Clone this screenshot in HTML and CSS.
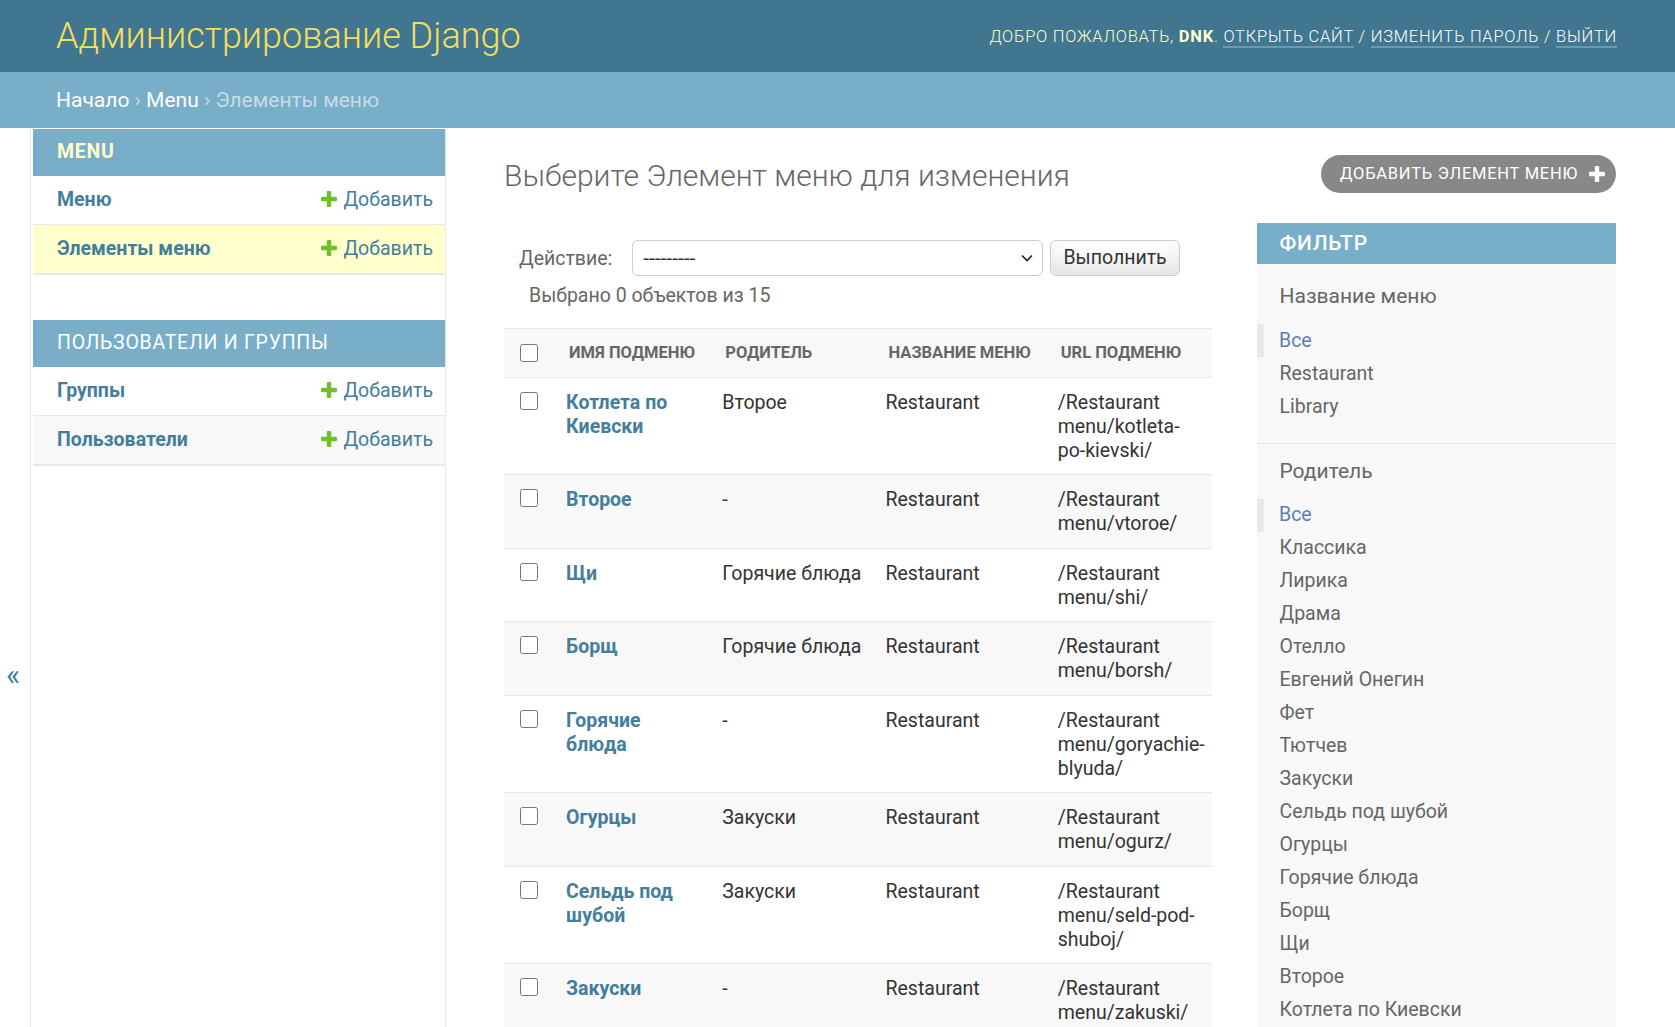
FILE: index.html
```html
<!DOCTYPE html>
<html lang="ru">
<head>
<meta charset="utf-8">
<title>Выберите Элемент меню для изменения | Администрирование Django</title>
<link rel="stylesheet" href="styles.css">
</head>
<body>
<div class="container">
  <header class="header">
    <div class="branding">
      <h1 class="site-name"><a href="#">Администрирование Django</a></h1>
    </div>
    <div class="user-tools">
      Добро пожаловать, <strong>dnk</strong>. <a href="#">Открыть сайт</a> / <a href="#">Изменить пароль</a> / <a href="#">Выйти</a>
    </div>
  </header>

  <div class="breadcrumbs">
    <a href="#">Начало</a> › <a href="#">Menu</a> › Элементы меню
  </div>

  <div class="main">
    <button class="toggle-nav" type="button" aria-label="Toggle navigation">«</button>

    <nav class="nav-sidebar">
      <div class="app-module current-app">
        <table class="app-table">
          <caption><a class="section" href="#">Menu</a></caption>
          <tr>
            <th scope="row"><a href="#">Меню</a></th>
            <td><a class="addlink" href="#"><svg class="plus" viewBox="192 188 1408 1408"><path d="M1600 796v192q0 40-28 68t-68 28h-416v416q0 40-28 68t-68 28h-192q-40 0-68-28t-28-68v-416h-416q-40 0-68-28t-28-68v-192q0-40 28-68t68-28h416v-416q0-40 28-68t68-28h192q40 0 68 28t28 68v416h416q40 0 68 28t28 68z"/></svg>Добавить</a></td>
          </tr>
          <tr class="current-model">
            <th scope="row"><a href="#">Элементы меню</a></th>
            <td><a class="addlink" href="#"><svg class="plus" viewBox="192 188 1408 1408"><path d="M1600 796v192q0 40-28 68t-68 28h-416v416q0 40-28 68t-68 28h-192q-40 0-68-28t-28-68v-416h-416q-40 0-68-28t-28-68v-192q0-40 28-68t68-28h416v-416q0-40 28-68t68-28h192q40 0 68 28t28 68v416h416q40 0 68 28t28 68z"/></svg>Добавить</a></td>
          </tr>
        </table>
      </div>

      <div class="app-module">
        <table class="app-table">
          <caption><a class="section" href="#">Пользователи и группы</a></caption>
          <tr>
            <th scope="row"><a href="#">Группы</a></th>
            <td><a class="addlink" href="#"><svg class="plus" viewBox="192 188 1408 1408"><path d="M1600 796v192q0 40-28 68t-68 28h-416v416q0 40-28 68t-68 28h-192q-40 0-68-28t-28-68v-416h-416q-40 0-68-28t-28-68v-192q0-40 28-68t68-28h416v-416q0-40 28-68t68-28h192q40 0 68 28t28 68v416h416q40 0 68 28t28 68z"/></svg>Добавить</a></td>
          </tr>
          <tr class="hover-row">
            <th scope="row"><a href="#">Пользователи</a></th>
            <td><a class="addlink" href="#"><svg class="plus" viewBox="192 188 1408 1408"><path d="M1600 796v192q0 40-28 68t-68 28h-416v416q0 40-28 68t-68 28h-192q-40 0-68-28t-28-68v-416h-416q-40 0-68-28t-28-68v-192q0-40 28-68t68-28h416v-416q0-40 28-68t68-28h192q40 0 68 28t28 68v416h416q40 0 68 28t28 68z"/></svg>Добавить</a></td>
          </tr>
        </table>
      </div>
    </nav>

    <div class="content">
      <div class="content-head">
        <h1>Выберите Элемент меню для изменения</h1>
        <a class="object-tool" href="#">Добавить Элемент меню<svg class="tool-plus" viewBox="192 188 1408 1408"><path d="M1600 796v192q0 40-28 68t-68 28h-416v416q0 40-28 68t-68 28h-192q-40 0-68-28t-28-68v-416h-416q-40 0-68-28t-28-68v-192q0-40 28-68t68-28h416v-416q0-40 28-68t68-28h192q40 0 68 28t28 68v416h416q40 0 68 28t28 68z"/></svg></a>
      </div>

      <div class="changelist">
        <div class="changelist-form">
          <div class="actions">
            <label>Действие: <span class="select-wrap"><select name="action">
              <option selected>---------</option>
              <option>Удалить выбранные Элементы меню</option>
            </select><svg class="chevron" viewBox="0 0 12 8"><path d="M1 1.5 6 6.5 11 1.5"/></svg></span></label>
            <button type="button" class="button">Выполнить</button>
            <span class="action-counter">Выбрано 0 объектов из 15</span>
          </div>

          <table class="results">
            <colgroup>
              <col class="c-check">
              <col class="c-name">
              <col class="c-parent">
              <col class="c-menu">
              <col class="c-url">
            </colgroup>
            <thead>
              <tr>
                <th class="action-checkbox-column"><input type="checkbox"></th>
                <th>Имя подменю</th>
                <th>Родитель</th>
                <th>Название меню</th>
                <th>URL подменю</th>
              </tr>
            </thead>
            <tbody>
              <tr class="row1">
                <td class="action-checkbox"><input type="checkbox"></td>
                <th><a href="#">Котлета по Киевски</a></th>
                <td>Второе</td>
                <td>Restaurant</td>
                <td class="url">/Restaurant menu/kotleta-po-kievski/</td>
              </tr>
              <tr class="row2">
                <td class="action-checkbox"><input type="checkbox"></td>
                <th><a href="#">Второе</a></th>
                <td>-</td>
                <td>Restaurant</td>
                <td class="url">/Restaurant menu/vtoroe/</td>
              </tr>
              <tr class="row1">
                <td class="action-checkbox"><input type="checkbox"></td>
                <th><a href="#">Щи</a></th>
                <td>Горячие блюда</td>
                <td>Restaurant</td>
                <td class="url">/Restaurant menu/shi/</td>
              </tr>
              <tr class="row2">
                <td class="action-checkbox"><input type="checkbox"></td>
                <th><a href="#">Борщ</a></th>
                <td>Горячие блюда</td>
                <td>Restaurant</td>
                <td class="url">/Restaurant menu/borsh/</td>
              </tr>
              <tr class="row1">
                <td class="action-checkbox"><input type="checkbox"></td>
                <th><a href="#">Горячие блюда</a></th>
                <td>-</td>
                <td>Restaurant</td>
                <td class="url">/Restaurant menu/goryachie-blyuda/</td>
              </tr>
              <tr class="row2">
                <td class="action-checkbox"><input type="checkbox"></td>
                <th><a href="#">Огурцы</a></th>
                <td>Закуски</td>
                <td>Restaurant</td>
                <td class="url">/Restaurant menu/ogurz/</td>
              </tr>
              <tr class="row1">
                <td class="action-checkbox"><input type="checkbox"></td>
                <th><a href="#">Сельдь под шубой</a></th>
                <td>Закуски</td>
                <td>Restaurant</td>
                <td class="url">/Restaurant menu/seld-pod-shuboj/</td>
              </tr>
              <tr class="row2">
                <td class="action-checkbox"><input type="checkbox"></td>
                <th><a href="#">Закуски</a></th>
                <td>-</td>
                <td>Restaurant</td>
                <td class="url">/Restaurant menu/zakuski/</td>
              </tr>
            </tbody>
          </table>
        </div>

        <div class="filter">
          <h2>Фильтр</h2>
          <h3>Название меню</h3>
          <ul>
            <li class="selected"><a href="#">Все</a></li>
            <li><a href="#">Restaurant</a></li>
            <li><a href="#">Library</a></li>
          </ul>
          <h3>Родитель</h3>
          <ul>
            <li class="selected"><a href="#">Все</a></li>
            <li><a href="#">Классика</a></li>
            <li><a href="#">Лирика</a></li>
            <li><a href="#">Драма</a></li>
            <li><a href="#">Отелло</a></li>
            <li><a href="#">Евгений Онегин</a></li>
            <li><a href="#">Фет</a></li>
            <li><a href="#">Тютчев</a></li>
            <li><a href="#">Закуски</a></li>
            <li><a href="#">Сельдь под шубой</a></li>
            <li><a href="#">Огурцы</a></li>
            <li><a href="#">Горячие блюда</a></li>
            <li><a href="#">Борщ</a></li>
            <li><a href="#">Щи</a></li>
            <li><a href="#">Второе</a></li>
            <li><a href="#">Котлета по Киевски</a></li>
          </ul>
        </div>
      </div>
    </div>
  </div>
</div>
</body>
</html>
```

FILE: styles.css
```css
html, body {
  margin: 0;
  padding: 0;
  overflow: hidden;
}

body {
  font-family: Roboto, "Noto Sans", "Liberation Sans", sans-serif;
  font-size: 21px;
  color: #333;
  background: #fff;
}

a {
  color: #447e9b;
  text-decoration: none;
}

/* Header */
.header {
  box-sizing: border-box;
  height: 72px;
  display: flex;
  justify-content: space-between;
  align-items: center;
  padding: 0 58px 0 56px;
  background: #417690;
  color: #ffc;
}

.site-name {
  margin: 0;
  font-size: 36px;
  font-weight: 300;
  line-height: 42px;
}

.site-name a {
  color: #f5dd5d;
}

.user-tools {
  font-size: 16.5px;
  font-weight: 300;
  letter-spacing: 0.75px;
  text-transform: uppercase;
  color: #ffc;
}

.user-tools strong {
  font-weight: 700;
}

.user-tools a {
  color: #fff;
  border-bottom: 2px solid rgba(255, 255, 255, 0.25);
}

/* Breadcrumbs */
.breadcrumbs {
  background: #79aec8;
  padding: 16px 56px 14px;
  color: #c4dce8;
  font-size: 21px;
  line-height: 25.5px;
}

.breadcrumbs a {
  color: #fff;
}

/* Main layout */
.main {
  display: flex;
}

.toggle-nav {
  flex: 0 0 31px;
  align-self: flex-start;
  height: 1094px;
  box-sizing: border-box;
  display: flex;
  align-items: center;
  justify-content: center;
  padding: 0 4px 0 0;
  margin: 0;
  border: 0;
  border-right: 1px solid #e8e8e8;
  background: #fff;
  color: #447e9b;
  font-family: Roboto, sans-serif;
  font-size: 30px;
  line-height: 1;
}

.nav-sidebar {
  flex: 0 0 415px;
  box-sizing: border-box;
  padding-left: 2px;
  border-top: 1.5px solid transparent;
  border-right: 1px solid #e8e8e8;
}

.app-module {
  margin-bottom: 45px;
}

.app-table {
  width: 100%;
  border-collapse: collapse;
}

.app-table caption {
  text-align: left;
  background: #79aec8;
  padding: 12.5px 12px 12px 24px;
  font-size: 19.5px;
  line-height: 22.5px;
  letter-spacing: 0.75px;
  text-transform: uppercase;
  font-weight: 400;
}

.app-table caption a {
  color: #fff;
}

.current-app caption a {
  color: #ffc;
  font-weight: 700;
}

.app-table th,
.app-table td {
  font-size: 19.5px;
  line-height: 24px;
  padding: 12px;
  border-bottom: 1px solid #e8e8e8;
  vertical-align: top;
  text-align: left;
}

.app-table th {
  width: 100%;
  padding-left: 24px;
  font-weight: 700;
}

.app-table td {
  white-space: nowrap;
}

.current-model {
  background: #ffc;
}

.hover-row {
  background: #f8f8f8;
}

.app-table tr:last-child th,
.app-table tr:last-child td {
  border-bottom-width: 2px;
}

.addlink {
  position: relative;
  padding-left: 24px;
}

.plus {
  position: absolute;
  left: 2px;
  top: 3px;
  width: 16px;
  height: 16px;
  fill: #70bf2b;
}

/* Content */
.content {
  flex: 1 1 auto;
  min-width: 0;
  padding: 30px 59px 0 58px;
}

.content-head {
  display: flex;
  justify-content: space-between;
  align-items: flex-start;
  margin-bottom: 30px;
}

.content-head h1 {
  margin: 0;
  font-size: 30px;
  line-height: 35px;
  font-weight: 300;
  color: #666;
}

.object-tool {
  display: flex;
  align-items: center;
  height: 38px;
  margin-top: -3px;
  padding: 0 11px 0 19px;
  background: #888;
  color: #fff;
  border-radius: 22px;
  font-size: 16.5px;
  letter-spacing: 0.75px;
  text-transform: uppercase;
}

.tool-plus {
  width: 16px;
  height: 16px;
  margin-left: 11px;
  fill: #fff;
}

.changelist {
  display: flex;
  align-items: flex-start;
}

.changelist-form {
  flex: 1 1 auto;
  min-width: 0;
}

/* Actions */
.actions {
  padding: 17px 15px 13px;
  line-height: 36px;
  color: #666;
}

.actions label {
  font-size: 19.5px;
}

.select-wrap {
  position: relative;
  display: inline-block;
  vertical-align: top;
  margin-left: 15px;
}

.actions select {
  display: block;
  box-sizing: border-box;
  width: 411px;
  height: 36px;
  margin: 0;
  padding: 0 0 0 10px;
  border: 1px solid #ccc;
  border-radius: 6px;
  background: #fff;
  color: #333;
  font-family: Roboto, sans-serif;
  font-size: 21px;
  -webkit-appearance: none;
  appearance: none;
}

.chevron {
  position: absolute;
  right: 10px;
  top: 14px;
  width: 12px;
  height: 8px;
  fill: none;
  stroke: #222;
  stroke-width: 1.6;
  pointer-events: none;
}

.actions .button {
  vertical-align: top;
  box-sizing: border-box;
  height: 36px;
  margin: 0 0 0 2px;
  padding: 6px 12px;
  border: 1px solid #ccc;
  border-radius: 6px;
  background: #fff;
  box-shadow: 0 -22px 30px -15px rgba(0, 0, 0, 0.15) inset;
  color: #333;
  font-family: Roboto, sans-serif;
  font-size: 19.5px;
  line-height: 1;
}

.action-counter {
  font-size: 19.5px;
  margin: 0 10px;
}

/* Results table */
.results {
  width: 100%;
  margin-top: 1px;
  border-collapse: collapse;
  table-layout: fixed;
}

.c-check { width: 50px; }
.c-name { width: 156px; }
.c-parent { width: 163px; }
.c-menu { width: 172px; }
.c-url { width: 166px; }

.results thead th {
  padding: 12px 15px;
  background: #f8f8f8;
  border-top: 1px solid #e8e8e8;
  border-bottom: 1px solid #e8e8e8;
  color: #666;
  font-size: 16.5px;
  line-height: 24px;
  font-weight: 700;
  text-align: left;
  text-transform: uppercase;
  white-space: nowrap;
  vertical-align: middle;
}

.results thead th.action-checkbox-column {
  padding: 12px 0;
  text-align: center;
}

.results tbody td,
.results tbody th {
  padding: 13px 12px 11.5px;
  border-bottom: 1px solid #e8e8e8;
  font-size: 19.5px;
  line-height: 24px;
  text-align: left;
  vertical-align: top;
}

.results tbody th {
  font-weight: 700;
}

.results tbody td.action-checkbox {
  padding: 12px 0 12.5px;
  text-align: center;
}

.results input[type="checkbox"] {
  width: 18px;
  height: 18px;
  margin: 0;
  vertical-align: middle;
}

.results tbody input[type="checkbox"] {
  margin-top: 2px;
  vertical-align: top;
}

.row1 { background: #fff; }
.row2 { background: #f8f8f8; }

/* Filter */
.filter {
  flex: 0 0 359px;
  margin-left: 45px;
  background: #f8f8f8;
}

.filter h2 {
  margin: 0 0 20px;
  padding: 8.5px 22.5px 8px;
  background: #79aec8;
  color: #fff;
  font-size: 21px;
  line-height: 24.5px;
  font-weight: 500;
  letter-spacing: 0.75px;
  text-transform: uppercase;
}

.filter h3 {
  margin: 15px 0 16px;
  padding: 0 22.5px;
  color: #666;
  font-size: 21px;
  line-height: 24.5px;
  font-weight: 400;
}

.filter h3 + ul + h3 {
  margin-bottom: 15px;
}

.filter ul {
  margin: 7.5px 0;
  padding: 0 22.5px 20px;
  border-bottom: 1px solid #e8e8e8;
  list-style: none;
}

.filter ul:last-child {
  border-bottom: none;
}

.filter li {
  padding: 1.5px 0;
  font-size: 19.5px;
  line-height: 30px;
}

.filter li.selected {
  border-left: 7.5px solid #e8e8e8;
  padding-left: 15px;
  margin-left: -22.5px;
}

.filter a {
  display: block;
  color: #666;
}

.filter li.selected a {
  color: #5b80b2;
}
```
